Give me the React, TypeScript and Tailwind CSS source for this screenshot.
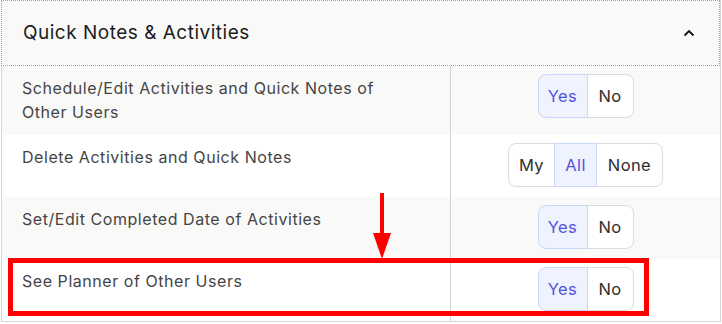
import React from 'react';

type Option = { label: string; width: string; active?: boolean };

interface PermissionRow {
  label: string;
  options: Option[];
  shaded?: boolean;
}

const yesNo: Option[] = [
  { label: 'Yes', width: 'w-[50px]', active: true },
  { label: 'No', width: 'w-[47px]' },
];

const rows: PermissionRow[] = [
  { label: 'Schedule/Edit Activities and Quick Notes of Other Users', options: yesNo, shaded: true },
  {
    label: 'Delete Activities and Quick Notes',
    options: [
      { label: 'My', width: 'w-[47px]' },
      { label: 'All', width: 'w-[43px]', active: true },
      { label: 'None', width: 'w-[67px]' },
    ],
  },
  { label: 'Set/Edit Completed Date of Activities', options: yesNo, shaded: true },
  { label: 'See Planner of Other Users', options: yesNo },
];

const Segmented: React.FC<{ options: Option[] }> = ({ options }) => (
  <div className="flex h-[44px]">
    {options.map((opt, i) => (
      <div
        key={opt.label}
        className={[
          'flex items-center justify-center border text-[16.5px] tracking-[0.4px]',
          opt.width,
          i > 0 ? '-ml-px' : '',
          i === 0 ? 'rounded-l-lg' : '',
          i === options.length - 1 ? 'rounded-r-lg' : '',
          opt.active
            ? 'relative z-10 border-[#c9d7fb] bg-[#eef3fe] text-[#5552d8]'
            : 'border-[#dcdcdc] bg-white text-[#2e2e2e]',
        ].join(' ')}
      >
        {opt.label}
      </div>
    ))}
  </div>
);

export default function App() {
  return (
    <div className="h-[324px] w-[722px] bg-white" style={{ fontFamily: 'Inter, "Open Sans", sans-serif' }}>
      <div className="relative ml-px w-[720px] border-r border-[#d4d4d4]">
        <div className="flex h-[66px] items-center justify-between border border-dotted border-[#a0a0b4] bg-[#f9f9f8] pl-[21px] pr-[24px]">
          <span className="text-[19px] tracking-[0.5px] text-[#1c1c1c]">Quick Notes &amp; Activities</span>
          <svg width="12" height="8" viewBox="0 0 12 8" fill="none">
            <path d="M1.5 6.5L6 2L10.5 6.5" stroke="#111" strokeWidth="1.8" />
          </svg>
        </div>

        <div className="border-b border-l border-[#d4d4d4]">
          {rows.map((row) => (
            <div key={row.label} className={`flex ${row.shaded ? 'bg-[#f9f9f8]' : 'bg-white'}`}>
              <div className="w-[448px] pb-[11px] pl-[20px] pr-[58px] pt-[10px] text-[16px] leading-[24px] tracking-[0.55px] text-[#454545]">
                {row.label}
              </div>
              <div className="flex flex-1 justify-center border-l border-[#d4d4d4] pb-[10px] pt-[8px]">
                <Segmented options={row.options} />
              </div>
            </div>
          ))}
        </div>

        {/* annotation overlay */}
        <div className="pointer-events-none absolute left-[7px] top-[258px] h-[58px] w-[641px] border-[5px] border-[#ff0000]" />
        <svg className="pointer-events-none absolute left-[371px] top-[193px]" width="22" height="66" viewBox="0 0 22 66">
          <rect x="8" y="0" width="4" height="42" fill="#ff0000" />
          <path d="M1 40 L19 40 L10 66 Z" fill="#ff0000" />
        </svg>
      </div>
    </div>
  );
}
